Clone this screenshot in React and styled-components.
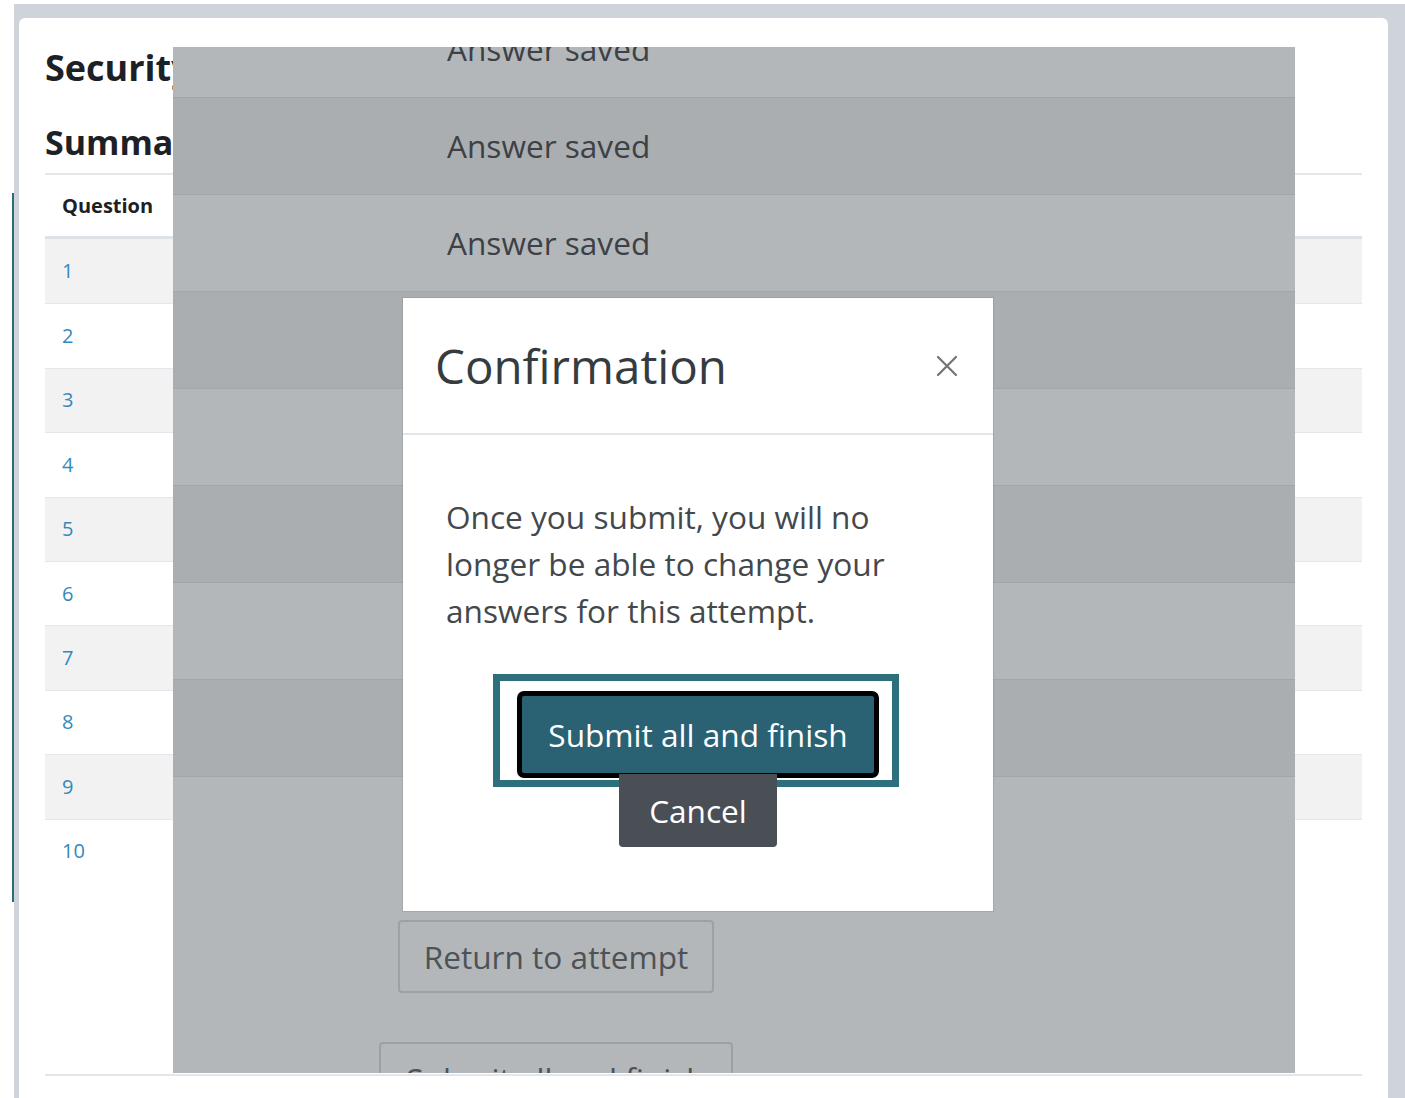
import React from 'react';
import styled, { createGlobalStyle } from 'styled-components';

// Global
const GlobalStyle = createGlobalStyle`
  html, body {
    margin: 0;
    padding: 0;
    background: #ffffff;
    font-family: 'Open Sans', 'Liberation Sans', sans-serif;
  }
  * {
    box-sizing: border-box;
  }
`;

// Page shell
const Root = styled.div`
  display: flex;
  width: 1405px;
  height: 1098px;
  overflow: hidden;
`;

const Gutter = styled.div`
  width: 14px;
  flex-shrink: 0;
  display: flex;
  justify-content: flex-end;
`;

const FocusBar = styled.div`
  width: 2px;
  height: 709px;
  margin-top: 193px;
  background: #2b6e79;
`;

const Frame = styled.div`
  flex: 1;
  margin-top: 4px;
  padding: 14px 17px 0 5px;
  background: #ced4da;
`;

const Card = styled.div`
  position: relative;
  height: 1100px;
  padding: 30px 26px 0 26px;
  background: #ffffff;
  border-radius: 6px 6px 0 0;
`;

const Title = styled.h2`
  margin: 0;
  font-size: ${(props) => props.size || 34}px;
  line-height: 40px;
  font-weight: 700;
  color: #1d2125;
  white-space: nowrap;
`;

const Subtitle = styled(Title)`
  margin-top: 34px;
`;

// Summary table
const Table = styled.div`
  margin-top: 11px;
  border-top: 2px solid #e4e7ea;
`;

const HeadRow = styled.div`
  display: flex;
  align-items: center;
  height: 64px;
  padding-left: 17px;
  border-bottom: 3px solid #dee2e6;
  font-size: 20px;
  font-weight: 700;
  color: #1d2125;
`;

const Row = styled.div`
  display: flex;
  align-items: center;
  height: 64.4px;
  padding-left: 17px;
  padding-bottom: 1px;
  border-top: ${(props) => (props.first ? 'none' : '1px solid #e3e6ea')};
  background: ${(props) => (props.striped ? '#f2f2f2' : 'transparent')};
  font-size: 20px;
  color: #3489bb;
`;

const BottomRule = styled.div`
  margin-top: 191px;
  height: 2px;
  background: #e4e7ea;
`;

// Dimmed layer with its own rows
const Backdrop = styled.div`
  position: absolute;
  left: 154px;
  top: 29px;
  width: 1122px;
  height: 1026px;
  overflow: hidden;
  background: #b4b7ba;
`;

const SavedRow = styled.div`
  height: 97px;
  padding-left: 274px;
  border-bottom: 1px solid #a3a6a9;
  background: ${(props) => (props.dark ? '#abaeb1' : '#b4b7ba')};
  font-size: 31.6px;
  line-height: 96px;
  color: #3d4146;
  white-space: nowrap;
  &:first-child {
    margin-top: -46px;
  }
`;

const Actions = styled.div`
  width: 766px;
  display: flex;
  flex-direction: column;
  align-items: center;
  padding-top: 143px;
  gap: 49px;
`;

const GhostButton = styled.div`
  height: 73px;
  padding: 0 ${(props) => props.pad || 24}px;
  display: flex;
  align-items: center;
  border: 2px solid #9ea1a4;
  border-radius: 4px;
  font-size: 31.6px;
  color: #4d5257;
  white-space: nowrap;
`;

// Modal
const Modal = styled.div`
  position: absolute;
  left: 230px;
  top: 251px;
  width: 590px;
  background: #ffffff;
  box-shadow: 0 0 0 1px rgba(0, 0, 0, 0.08);
`;

const ModalHeader = styled.div`
  height: 137px;
  display: flex;
  align-items: center;
  justify-content: space-between;
  padding: 0 35px 0 32px;
  border-bottom: 2px solid #e3e6e9;
`;

const ModalTitle = styled.div`
  font-size: 47.5px;
  line-height: 56px;
  color: #363b40;
`;

const Close = styled.div`
  width: 22px;
  height: 22px;
  display: flex;
`;

const ModalBody = styled.div`
  padding: 58px 47px 64px 43px;
`;

const Message = styled.p`
  margin: 0;
  font-size: 31.6px;
  line-height: 47px;
  color: #43484d;
  white-space: nowrap;
`;

const ButtonStack = styled.div`
  margin-top: 40px;
  display: flex;
  flex-direction: column;
  align-items: center;
`;

const FocusRing = styled.div`
  padding: 10px 13px 2px 17px;
  border: 7px solid #2d6f7a;
`;

const PrimaryButton = styled.div`
  height: 87px;
  padding: 0 26px;
  display: flex;
  align-items: center;
  border: 5px solid #000000;
  border-radius: 7px;
  background: #2a6173;
  font-size: 31.6px;
  color: #ffffff;
  white-space: nowrap;
`;

const SecondaryButton = styled.div`
  position: relative;
  margin-top: -13px;
  margin-left: 4px;
  width: 158px;
  height: 73px;
  display: flex;
  align-items: center;
  justify-content: center;
  border-radius: 0 0 4px 4px;
  background: #4a4f56;
  font-size: 31.6px;
  color: #ffffff;
`;

const questions = [1, 2, 3, 4, 5, 6, 7, 8, 9, 10];
const savedRows = [0, 1, 2, 3, 4, 5, 6, 7];

const App = () => {
  return (
    <>
      <GlobalStyle />
      <Root>
        <Gutter>
          <FocusBar />
        </Gutter>
        <Frame>
          <Card>
            <Title size={36}>Security quiz</Title>
            <Subtitle>Summary of attempt</Subtitle>
            <Table>
              <HeadRow>Question</HeadRow>
              {questions.map((n, i) => (
                <Row key={n} first={i === 0} striped={i % 2 === 0 && n !== 10}>
                  {n}
                </Row>
              ))}
            </Table>
            <BottomRule />

            <Backdrop>
              {savedRows.map((i) => (
                <SavedRow key={i} dark={i % 2 === 1}>
                  Answer saved
                </SavedRow>
              ))}
              <Actions>
                <GhostButton>Return to attempt</GhostButton>
                <GhostButton pad={25}>Submit all and finish</GhostButton>
              </Actions>

              <Modal>
                <ModalHeader>
                  <ModalTitle>Confirmation</ModalTitle>
                  <Close>
                    <svg width="22" height="22" viewBox="0 0 22 22">
                      <path
                        d="M2 2 L20 20 M20 2 L2 20"
                        stroke="#707479"
                        strokeWidth="2.2"
                        strokeLinecap="round"
                      />
                    </svg>
                  </Close>
                </ModalHeader>
                <ModalBody>
                  <Message>
                    Once you submit, you will no
                    <br />
                    longer be able to change your
                    <br />
                    answers for this attempt.
                  </Message>
                  <ButtonStack>
                    <FocusRing>
                      <PrimaryButton>Submit all and finish</PrimaryButton>
                    </FocusRing>
                    <SecondaryButton>Cancel</SecondaryButton>
                  </ButtonStack>
                </ModalBody>
              </Modal>
            </Backdrop>
          </Card>
        </Frame>
      </Root>
    </>
  );
};

export default App;
